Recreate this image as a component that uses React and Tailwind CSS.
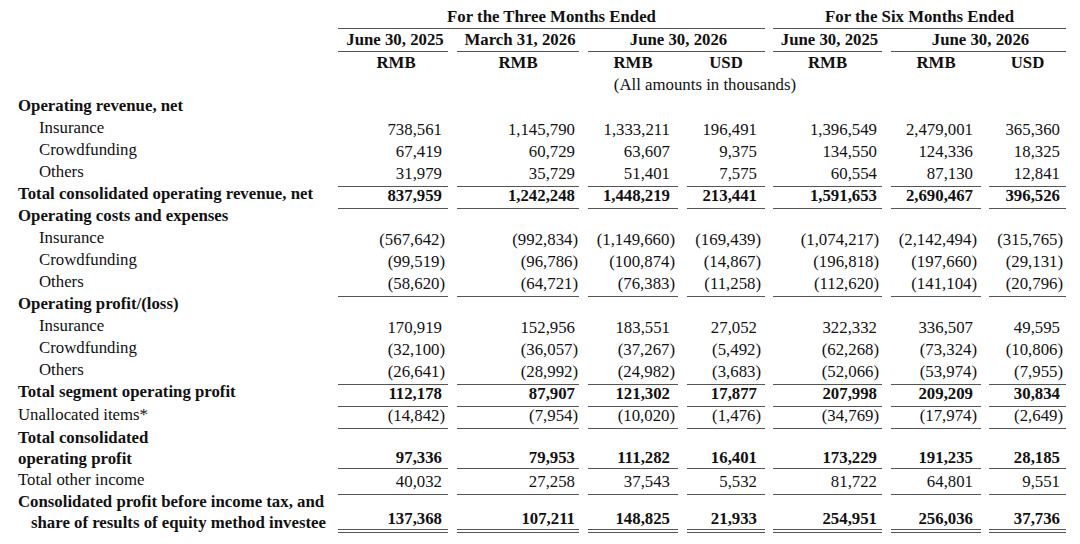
import React from 'react';

// column geometry: width incl. left gap, right padding for plain and bracketed numbers
const cols = [
  { w: 'w-[110px]', pl: 'pl-0', pos: 'pr-[6px]', neg: 'pr-[3px]' },
  { w: 'w-[131px]', pl: 'pl-[9px]', pos: 'pr-[4px]', neg: 'pr-[1px]' },
  { w: 'w-[99px]', pl: 'pl-[9px]', pos: 'pr-[8px]', neg: 'pr-[3px]' },
  { w: 'w-[87px]', pl: 'pl-[9px]', pos: 'pr-[8px]', neg: 'pr-[4px]' },
  { w: 'w-[117px]', pl: 'pl-[8px]', pos: 'pr-[5px]', neg: 'pr-[3px]' },
  { w: 'w-[99px]', pl: 'pl-[9px]', pos: 'pr-[8px]', neg: 'pr-[4px]' },
  { w: 'w-[85px]', pl: 'pl-[8px]', pos: 'pr-[6px]', neg: 'pr-[3px]' },
];

const rows = [
  { label: 'Operating revenue, net', head: true },
  { label: 'Insurance', indent: true, v: ['738,561', '1,145,790', '1,333,211', '196,491', '1,396,549', '2,479,001', '365,360'] },
  { label: 'Crowdfunding', indent: true, v: ['67,419', '60,729', '63,607', '9,375', '134,550', '124,336', '18,325'] },
  { label: 'Others', indent: true, line: true, v: ['31,979', '35,729', '51,401', '7,575', '60,554', '87,130', '12,841'] },
  { label: 'Total consolidated operating revenue, net', head: true, bold: true, line: true, v: ['837,959', '1,242,248', '1,448,219', '213,441', '1,591,653', '2,690,467', '396,526'] },
  { label: 'Operating costs and expenses', head: true },
  { label: 'Insurance', indent: true, v: ['(567,642)', '(992,834)', '(1,149,660)', '(169,439)', '(1,074,217)', '(2,142,494)', '(315,765)'] },
  { label: 'Crowdfunding', indent: true, v: ['(99,519)', '(96,786)', '(100,874)', '(14,867)', '(196,818)', '(197,660)', '(29,131)'] },
  { label: 'Others', indent: true, line: true, v: ['(58,620)', '(64,721)', '(76,383)', '(11,258)', '(112,620)', '(141,104)', '(20,796)'] },
  { label: 'Operating profit/(loss)', head: true },
  { label: 'Insurance', indent: true, v: ['170,919', '152,956', '183,551', '27,052', '322,332', '336,507', '49,595'] },
  { label: 'Crowdfunding', indent: true, v: ['(32,100)', '(36,057)', '(37,267)', '(5,492)', '(62,268)', '(73,324)', '(10,806)'] },
  { label: 'Others', indent: true, line: true, v: ['(26,641)', '(28,992)', '(24,982)', '(3,683)', '(52,066)', '(53,974)', '(7,955)'] },
  { label: 'Total segment operating profit', head: true, bold: true, line: true, v: ['112,178', '87,907', '121,302', '17,877', '207,998', '209,209', '30,834'] },
  { label: 'Unallocated items*', line: true, taller: true, v: ['(14,842)', '(7,954)', '(10,020)', '(1,476)', '(34,769)', '(17,974)', '(2,649)'] },
  { label: ['Total consolidated', 'operating profit'], head: true, bold: true, line: true, v: ['97,336', '79,953', '111,282', '16,401', '173,229', '191,235', '28,185'] },
  { label: 'Total other income', line: true, v: ['40,032', '27,258', '37,543', '5,532', '81,722', '64,801', '9,551'] },
  { label: ['Consolidated profit before income tax, and', 'share of results of equity method investee'], head: true, bold: true, double: true, v: ['137,368', '107,211', '148,825', '21,933', '254,951', '256,036', '37,736'] },
];

const lineCls = 'border-b border-[#555]';

function Label({ row }) {
  if (Array.isArray(row.label)) {
    return (
      <div className="w-[338px] shrink-0 pl-[18px] font-bold leading-[21px]">
        <div>{row.label[0]}</div>
        <div className={row.double ? 'pl-[13px]' : ''}>{row.label[1]}</div>
      </div>
    );
  }
  return (
    <div className={`w-[338px] shrink-0 flex items-center ${row.indent ? 'pl-[39px]' : 'pl-[18px]'} ${row.head ? 'font-bold' : ''}`}>
      {row.label}
    </div>
  );
}

function Row({ row }) {
  const tall = Array.isArray(row.label);
  return (
    <div className={`flex ${tall ? '' : row.taller ? 'h-[24px]' : 'h-[22px]'}`}>
      <Label row={row} />
      {cols.map((c, i) => {
        const val = row.v ? row.v[i] : '';
        const neg = val.startsWith('(');
        return (
          <div key={i} className={`${c.w} ${c.pl} shrink-0 flex flex-col`}>
            <div
              className={`flex-1 flex justify-end ${tall ? 'items-end leading-[21px]' : 'items-center'} ${neg ? c.neg : c.pos} ${row.bold ? 'font-bold' : ''} ${row.line || row.double ? lineCls : ''}`}
            >
              {val}
            </div>
            {row.double && <div className="mt-[2px] border-t border-[#555]" />}
          </div>
        );
      })}
    </div>
  );
}

export default function App() {
  return (
    <div
      className="w-[1080px] h-[544px] bg-white text-[#111] text-[16.8px] pt-[6px] overflow-hidden"
      style={{ fontFamily: '"Liberation Serif", "Times New Roman", serif' }}
    >
      {/* period headers */}
      <div className="flex h-[23px] font-bold">
        <div className="w-[338px] shrink-0" />
        <div className="w-[427px] shrink-0">
          <div className={`h-full flex items-center justify-center ${lineCls}`}>For the Three Months Ended</div>
        </div>
        <div className="w-[301px] shrink-0 pl-[8px]">
          <div className={`h-full flex items-center justify-center ${lineCls}`}>For the Six Months Ended</div>
        </div>
      </div>
      <div className="flex h-[23px] font-bold">
        <div className="w-[338px] shrink-0" />
        <div className="w-[110px] shrink-0">
          <div className={`h-full flex items-center justify-center pl-[4px] ${lineCls}`}>June 30, 2025</div>
        </div>
        <div className="w-[131px] shrink-0 pl-[9px]">
          <div className={`h-full flex items-center justify-center pl-[4px] ${lineCls}`}>March 31, 2026</div>
        </div>
        <div className="w-[186px] shrink-0 pl-[9px]">
          <div className={`h-full flex items-center justify-center pl-[4px] ${lineCls}`}>June 30, 2026</div>
        </div>
        <div className="w-[117px] shrink-0 pl-[8px]">
          <div className={`h-full flex items-center justify-center pl-[4px] ${lineCls}`}>June 30, 2025</div>
        </div>
        <div className="w-[184px] shrink-0 pl-[9px]">
          <div className={`h-full flex items-center justify-center pl-[4px] ${lineCls}`}>June 30, 2026</div>
        </div>
      </div>
      <div className="flex h-[22px] font-bold">
        <div className="w-[338px] shrink-0" />
        {cols.map((c, i) => (
          <div key={i} className={`${c.w} ${c.pl} shrink-0 flex items-center justify-center pl-[6px]`}>
            {i === 3 || i === 6 ? 'USD' : 'RMB'}
          </div>
        ))}
      </div>
      <div className="flex h-[21px]">
        <div className="w-[338px] shrink-0" />
        <div className="w-[728px] shrink-0 flex items-center justify-center pl-[6px]">(All amounts in thousands)</div>
      </div>

      {rows.map((row, i) => (
        <Row key={i} row={row} />
      ))}
    </div>
  );
}
